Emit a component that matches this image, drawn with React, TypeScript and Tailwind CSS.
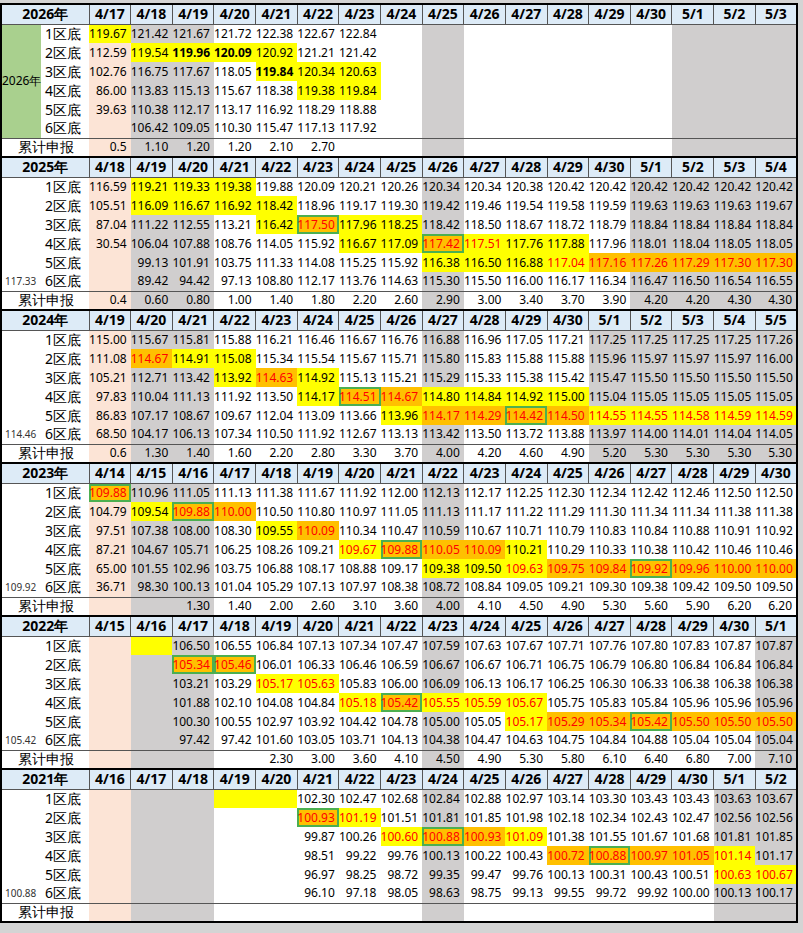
import React from 'react';

// cell flags: y = yellow, o = orange + red text, r = red text, b = bold, g = green frame
type Block = {
  year: string;
  side?: string; // small number left of 6区底
  green?: boolean; // 2026 style merged year cell
  dates: string[];
  peach: number[];
  gray: number[];
  rows: string[][];
  cum: string[];
};

const dates = (list: string) => list.split(' ');
const row = (list: string) => list.split(',').map((s) => s.trim());

const blocks: Block[] = [
  {
    year: '2026年',
    green: true,
    dates: dates('4/17 4/18 4/19 4/20 4/21 4/22 4/23 4/24 4/25 4/26 4/27 4/28 4/29 4/30 5/1 5/2 5/3'),
    peach: [0],
    gray: [1, 2, 8, 14, 15, 16],
    rows: [
      row('119.67:y,121.42,121.67,121.72,122.38,122.67,122.84'),
      row('112.59,119.54:y,119.96:yb,120.09:yb,120.92:y,121.21,121.42'),
      row('102.76,116.75,117.67,118.05,119.84:yb,120.34:y,120.63:y'),
      row('86.00,113.83,115.13,115.67,118.38,119.38:y,119.84:y'),
      row('39.63,110.38,112.17,113.17,116.92,118.29,118.88'),
      row(',106.42,109.05,110.30,115.47,117.13,117.92'),
    ],
    cum: row('0.5,1.10,1.20,1.20,2.10,2.70'),
  },
  {
    year: '2025年',
    side: '117.33',
    dates: dates('4/18 4/19 4/20 4/21 4/22 4/23 4/24 4/25 4/26 4/27 4/28 4/29 4/30 5/1 5/2 5/3 5/4'),
    peach: [0],
    gray: [1, 2, 8, 13, 14, 15, 16],
    rows: [
      row('116.59,119.21:y,119.33:y,119.38:y,119.88,120.09,120.21,120.26,120.34,120.34,120.38,120.42,120.42,120.42,120.42,120.42,120.42'),
      row('105.51,116.09:y,116.67:y,116.92:y,118.42:y,118.96,119.17,119.30,119.42,119.46,119.54,119.58,119.59,119.63,119.63,119.63,119.67'),
      row('87.04,111.22,112.55,113.21,116.42:y,117.50:og,117.96:y,118.25:y,118.42,118.50,118.67,118.72,118.79,118.84,118.84,118.84,118.84'),
      row('30.54,106.04,107.88,108.76,114.05,115.92,116.67:y,117.09:y,117.42:og,117.51:yr,117.76:y,117.88:y,117.96,118.01,118.04,118.05,118.05'),
      row(',99.13,101.91,103.75,111.33,114.08,115.25,115.92,116.38:y,116.50:y,116.88:y,117.04:yr,117.16:o,117.26:o,117.29:o,117.30:o,117.30:o'),
      row(',89.42,94.42,97.13,108.80,112.17,113.76,114.63,115.30,115.50,116.00,116.17,116.34,116.47,116.50,116.54,116.55'),
    ],
    cum: row('0.4,0.60,0.80,1.00,1.40,1.80,2.20,2.60,2.90,3.00,3.40,3.70,3.90,4.20,4.20,4.30,4.30'),
  },
  {
    year: '2024年',
    side: '114.46',
    dates: dates('4/19 4/20 4/21 4/22 4/23 4/24 4/25 4/26 4/27 4/28 4/29 4/30 5/1 5/2 5/3 5/4 5/5'),
    peach: [0],
    gray: [1, 2, 8, 12, 13, 14, 15, 16],
    rows: [
      row('115.00,115.67,115.81,115.88,116.21,116.46,116.67,116.76,116.88,116.96,117.05,117.21,117.25,117.25,117.25,117.25,117.26'),
      row('111.08,114.67:o,114.91:y,115.08:y,115.34,115.54,115.67,115.71,115.80,115.83,115.88,115.88,115.96,115.97,115.97,115.97,116.00'),
      row('105.21,112.71,113.42,113.92:y,114.63:o,114.92:y,115.13,115.21,115.29,115.33,115.38,115.42,115.47,115.50,115.50,115.50,115.50'),
      row('97.83,110.04,111.13,111.92,113.50,114.17:y,114.51:og,114.67:o,114.80:y,114.84:y,114.92:y,115.00:y,115.04,115.05,115.05,115.05,115.05'),
      row('86.83,107.17,108.67,109.67,112.04,113.09,113.66,113.96:y,114.17:o,114.29:o,114.42:og,114.50:o,114.55:yr,114.55:yr,114.58:yr,114.59:yr,114.59:yr'),
      row('68.50,104.17,106.13,107.34,110.50,111.92,112.67,113.13,113.42,113.50,113.72,113.88,113.97,114.00,114.01,114.04,114.05'),
    ],
    cum: row('0.6,1.30,1.40,1.60,2.20,2.80,3.30,3.70,4.00,4.20,4.60,4.90,5.20,5.30,5.30,5.30,5.30'),
  },
  {
    year: '2023年',
    side: '109.92',
    dates: dates('4/14 4/15 4/16 4/17 4/18 4/19 4/20 4/21 4/22 4/23 4/24 4/25 4/26 4/27 4/28 4/29 4/30'),
    peach: [0],
    gray: [1, 2, 8],
    rows: [
      row('109.88:og,110.96,111.05,111.13,111.38,111.67,111.92,112.00,112.13,112.17,112.25,112.30,112.34,112.42,112.46,112.50,112.50'),
      row('104.79,109.54:y,109.88:og,110.00:o,110.50,110.80,110.97,111.05,111.13,111.17,111.22,111.29,111.30,111.34,111.34,111.38,111.38'),
      row('97.51,107.38,108.00,108.30,109.55:y,110.09:o,110.34,110.47,110.59,110.67,110.71,110.79,110.83,110.84,110.88,110.91,110.92'),
      row('87.21,104.67,105.71,106.25,108.26,109.21,109.67:yr,109.88:og,110.05:o,110.09:o,110.21:y,110.29,110.33,110.38,110.42,110.46,110.46'),
      row('65.00,101.55,102.96,103.75,106.88,108.17,108.88,109.17,109.38:y,109.50:y,109.63:yr,109.75:o,109.84:o,109.92:og,109.96:o,110.00:o,110.00:o'),
      row('36.71,98.30,100.13,101.04,105.29,107.13,107.97,108.38,108.72,108.84,109.05,109.21,109.30,109.38,109.42,109.50,109.50'),
    ],
    cum: row(',,1.30,1.40,2.00,2.60,3.10,3.60,4.00,4.10,4.50,4.90,5.30,5.60,5.90,6.20,6.20'),
  },
  {
    year: '2022年',
    side: '105.42',
    dates: dates('4/15 4/16 4/17 4/18 4/19 4/20 4/21 4/22 4/23 4/24 4/25 4/26 4/27 4/28 4/29 4/30 5/1'),
    peach: [0],
    gray: [1, 2, 8, 16],
    rows: [
      row(',:y,106.50,106.55,106.84,107.13,107.34,107.47,107.59,107.63,107.67,107.71,107.76,107.80,107.83,107.87,107.87'),
      row(',,105.34:og,105.46:og,106.01,106.33,106.46,106.59,106.67,106.67,106.71,106.75,106.79,106.80,106.84,106.84,106.84'),
      row(',,103.21,103.29,105.17:yr,105.63:yr,105.83,106.00,106.09,106.13,106.17,106.25,106.30,106.33,106.38,106.38,106.38'),
      row(',,101.88,102.10,104.08,104.84,105.18:yr,105.42:og,105.55:yr,105.59:yr,105.67:yr,105.75,105.83,105.84,105.96,105.96,105.96'),
      row(',,100.30,100.55,102.97,103.92,104.42,104.78,105.00,105.05,105.17:yr,105.29:o,105.34:o,105.42:og,105.50:o,105.50:o,105.50:o'),
      row(',,97.42,97.42,101.60,103.05,103.71,104.13,104.38,104.47,104.63,104.75,104.84,104.88,105.04,105.04,105.04'),
    ],
    cum: row(',,,,2.30,3.00,3.60,4.10,4.50,4.90,5.30,5.80,6.10,6.40,6.80,7.00,7.10'),
  },
  {
    year: '2021年',
    side: '100.88',
    dates: dates('4/16 4/17 4/18 4/19 4/20 4/21 4/22 4/23 4/24 4/25 4/26 4/27 4/28 4/29 4/30 5/1 5/2'),
    peach: [0],
    gray: [1, 2, 8, 15, 16],
    rows: [
      row(',,,:y,:y,102.30,102.47,102.68,102.84,102.88,102.97,103.14,103.30,103.43,103.43,103.63,103.67'),
      row(',,,,,100.93:og,101.19:yr,101.51,101.81,101.85,101.98,102.18,102.34,102.43,102.47,102.56,102.56'),
      row(',,,,,99.87,100.26,100.60:yr,100.88:og,100.93:o,101.09:yr,101.38,101.55,101.67,101.68,101.81,101.85'),
      row(',,,,,98.51,99.22,99.76,100.13,100.22,100.43,100.72:o,100.88:og,100.97:o,101.05:o,101.14:yr,101.17'),
      row(',,,,,96.97,98.25,98.72,99.35,99.47,99.76,100.13,100.31,100.43,100.51,100.63:yr,100.67:yr'),
      row(',,,,,96.10,97.18,98.05,98.63,98.75,99.13,99.55,99.72,99.92,100.00,100.13,100.17'),
    ],
    cum: [],
  },
];

const colBg = (b: Block, i: number) =>
  b.peach.includes(i) ? 'bg-[#fce4d6]' : b.gray.includes(i) ? 'bg-[#d0cece]' : 'bg-white';

function Cell({ raw, bg }: { raw: string; bg: string }) {
  const [value, flags = ''] = (raw || '').split(':');
  let cls = bg + ' text-black';
  if (flags.includes('y')) cls = 'bg-[#ffff00] text-black';
  if (flags.includes('o')) cls = 'bg-[#ffc000] text-[#ff0000]';
  if (flags.includes('r')) cls = 'bg-[#ffff00] text-[#ff0000]';
  if (flags.includes('b')) cls += ' font-bold';
  if (flags.includes('g')) cls += ' shadow-[inset_0_0_0_2px_#4caf50]';
  return <td className={`h-[19px] pr-[4px] text-right ${cls}`}>{value}</td>;
}

function YearBlock({ b }: { b: Block }) {
  const labels = ['1区底', '2区底', '3区底', '4区底', '5区底', '6区底'];
  return (
    <tbody>
      <tr className="border-t-2 border-black bg-[#ddebf7] text-[14px] font-bold">
        <td colSpan={2} className="h-[20px] border-r border-b border-[#555] text-center">{b.year}</td>
        {b.dates.map((d, i) => (
          <td key={i} className="border-r border-b border-[#555] text-center">{d}</td>
        ))}
      </tr>
      {labels.map((label, r) => (
        <tr key={r}>
          {b.green && r === 0 && (
            <td rowSpan={6} className="whitespace-nowrap bg-[#a9d08e] text-left text-[12px]">{b.year}</td>
          )}
          {!b.green && (
            <td className="whitespace-nowrap pl-[3px] text-left text-[10px] text-[#333]">{r === 5 ? b.side : ''}</td>
          )}
          <td className="h-[19px] pl-[4px] text-left text-[14px]">{label}</td>
          {b.dates.map((_, i) => (
            <Cell key={i} raw={b.rows[r][i]} bg={colBg(b, i)} />
          ))}
        </tr>
      ))}
      <tr className="border-t border-[#555]">
        <td colSpan={2} className="h-[19px] text-center text-[14px]">累计申报</td>
        {b.dates.map((_, i) => (
          <td key={i} className={`pr-[4px] text-right ${colBg(b, i)}`}>{b.cum[i] || ''}</td>
        ))}
      </tr>
    </tbody>
  );
}

export default function App() {
  return (
    <div className="min-h-[933px] bg-[#d4d4d4] pt-[3px] font-['Liberation_Sans','Noto_Sans_CJK_SC',sans-serif]">
      <table className="w-[798px] table-fixed border-collapse border-x-2 border-b-2 border-black bg-white text-[12px] leading-none text-black">
        <colgroup>
          <col className="w-[40px]" />
          <col className="w-[48px]" />
        </colgroup>
        {blocks.map((b) => (
          <YearBlock key={b.year} b={b} />
        ))}
      </table>
    </div>
  );
}
